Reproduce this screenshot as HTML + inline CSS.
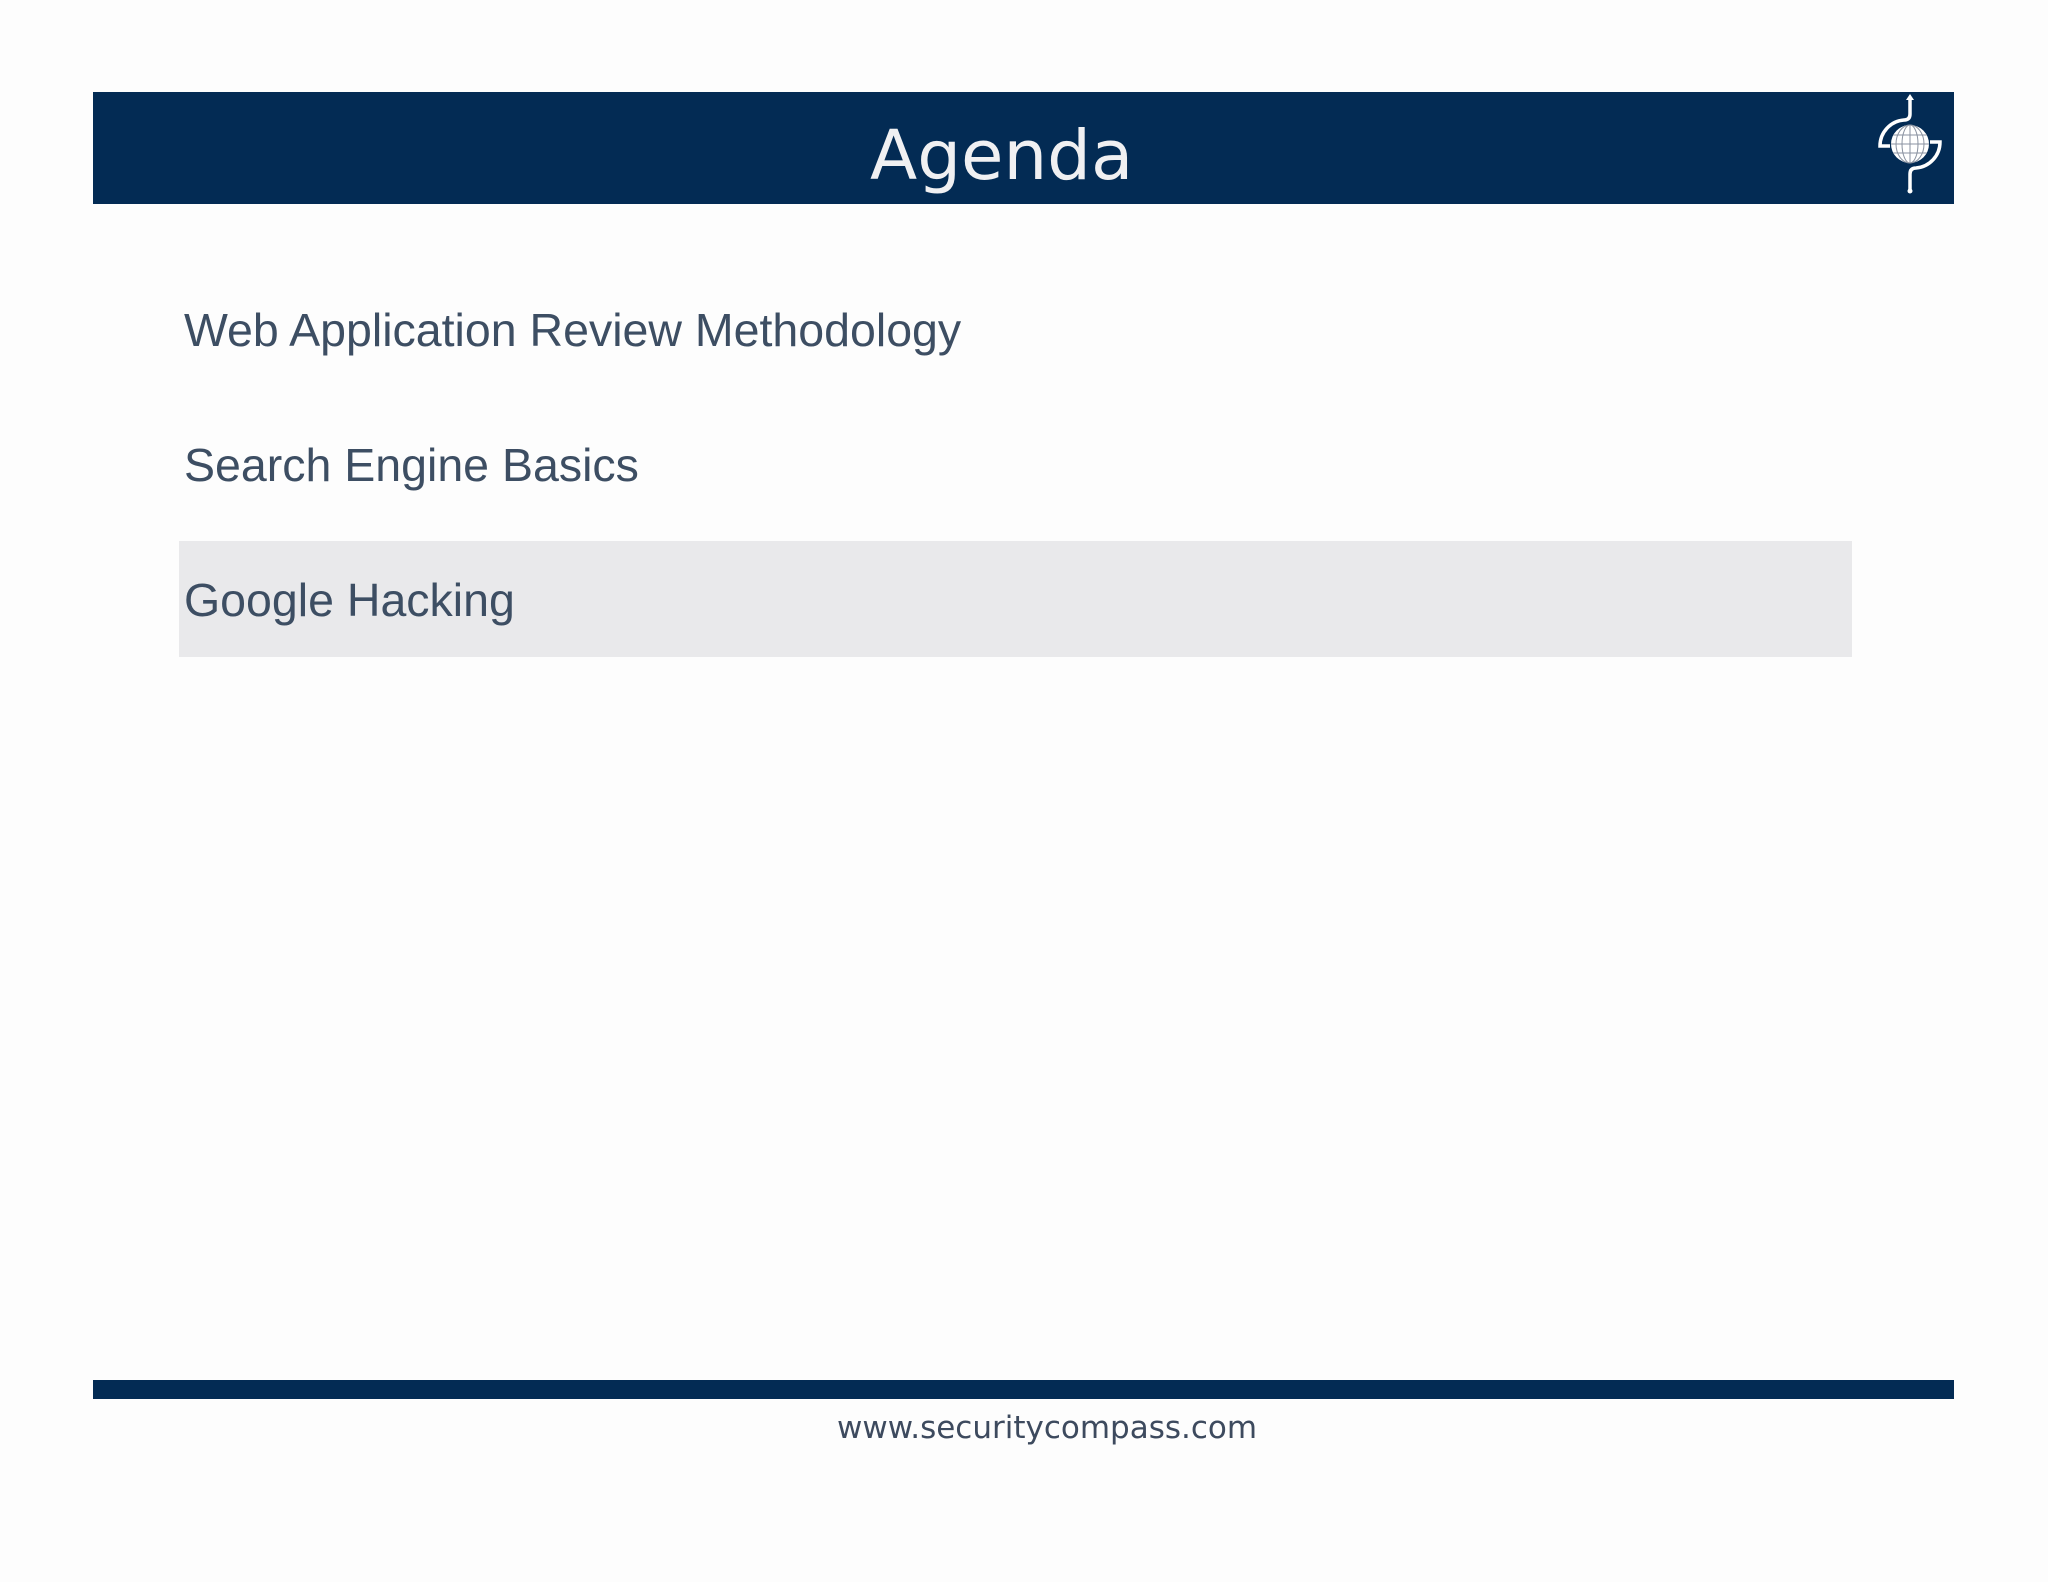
<!DOCTYPE html>
<html><head><meta charset="utf-8"><style>
html,body{margin:0;padding:0;background:#fdfdfd;}
body{width:2048px;height:1582px;position:relative;overflow:hidden;font-family:"Liberation Sans",sans-serif;}
.hdr{position:absolute;left:93px;top:92px;width:1861px;height:112px;background:#032b54;}
.title{position:absolute;left:870px;top:156px;font-family:"DejaVu Sans",sans-serif;font-size:69px;color:#f0f0f2;line-height:0;white-space:nowrap;}
.item{position:absolute;left:184px;font-size:46.5px;color:#3d4e63;line-height:0;white-space:nowrap;}
.hl{position:absolute;left:179px;top:541px;width:1673px;height:116px;background:#e9e9eb;}
.fbar{position:absolute;left:93px;top:1380px;width:1861px;height:19px;background:#032b54;}
.foot{position:absolute;left:837px;top:1428px;font-family:"DejaVu Sans",sans-serif;font-size:31px;color:#3d4a5e;line-height:0;white-space:nowrap;}
</style></head><body>
<div class="hdr"></div>
<div class="title">Agenda</div>
<svg style="position:absolute;left:1870px;top:92px" width="80" height="104" viewBox="0 0 80 104">
<g fill="none" stroke="#fff" stroke-width="3.5">
<line x1="40" y1="6" x2="40" y2="22"/>
<path d="M40 22 Q40 28 34 28 A26 26 0 0 0 10 54 L20 54"/>
<path d="M40 82 Q40 76 46 76 A26 26 0 0 0 70 50 L60 50"/>
<line x1="40" y1="82" x2="40" y2="98"/>
</g>
<polygon points="36,8 44,8 40,2" fill="#fff"/>
<circle cx="40" cy="99" r="2.5" fill="#fff"/>
<circle cx="40" cy="52" r="19" fill="#fff"/>
<g fill="none" stroke="#8a92a0" stroke-width="1">
<line x1="21" y1="52" x2="59" y2="52"/><line x1="23" y1="43" x2="57" y2="43"/><line x1="23" y1="61" x2="57" y2="61"/>
<line x1="40" y1="33" x2="40" y2="71"/><ellipse cx="40" cy="52" rx="8" ry="19"/><ellipse cx="40" cy="52" rx="14" ry="19"/>
</g>
</svg>
<div class="item" style="top:330px">Web Application Review Methodology</div>
<div class="item" style="top:465px">Search Engine Basics</div>
<div class="hl"></div>
<div class="item" style="top:600px">Google Hacking</div>
<div class="fbar"></div>
<div class="foot">www.securitycompass.com</div>
</body></html>
